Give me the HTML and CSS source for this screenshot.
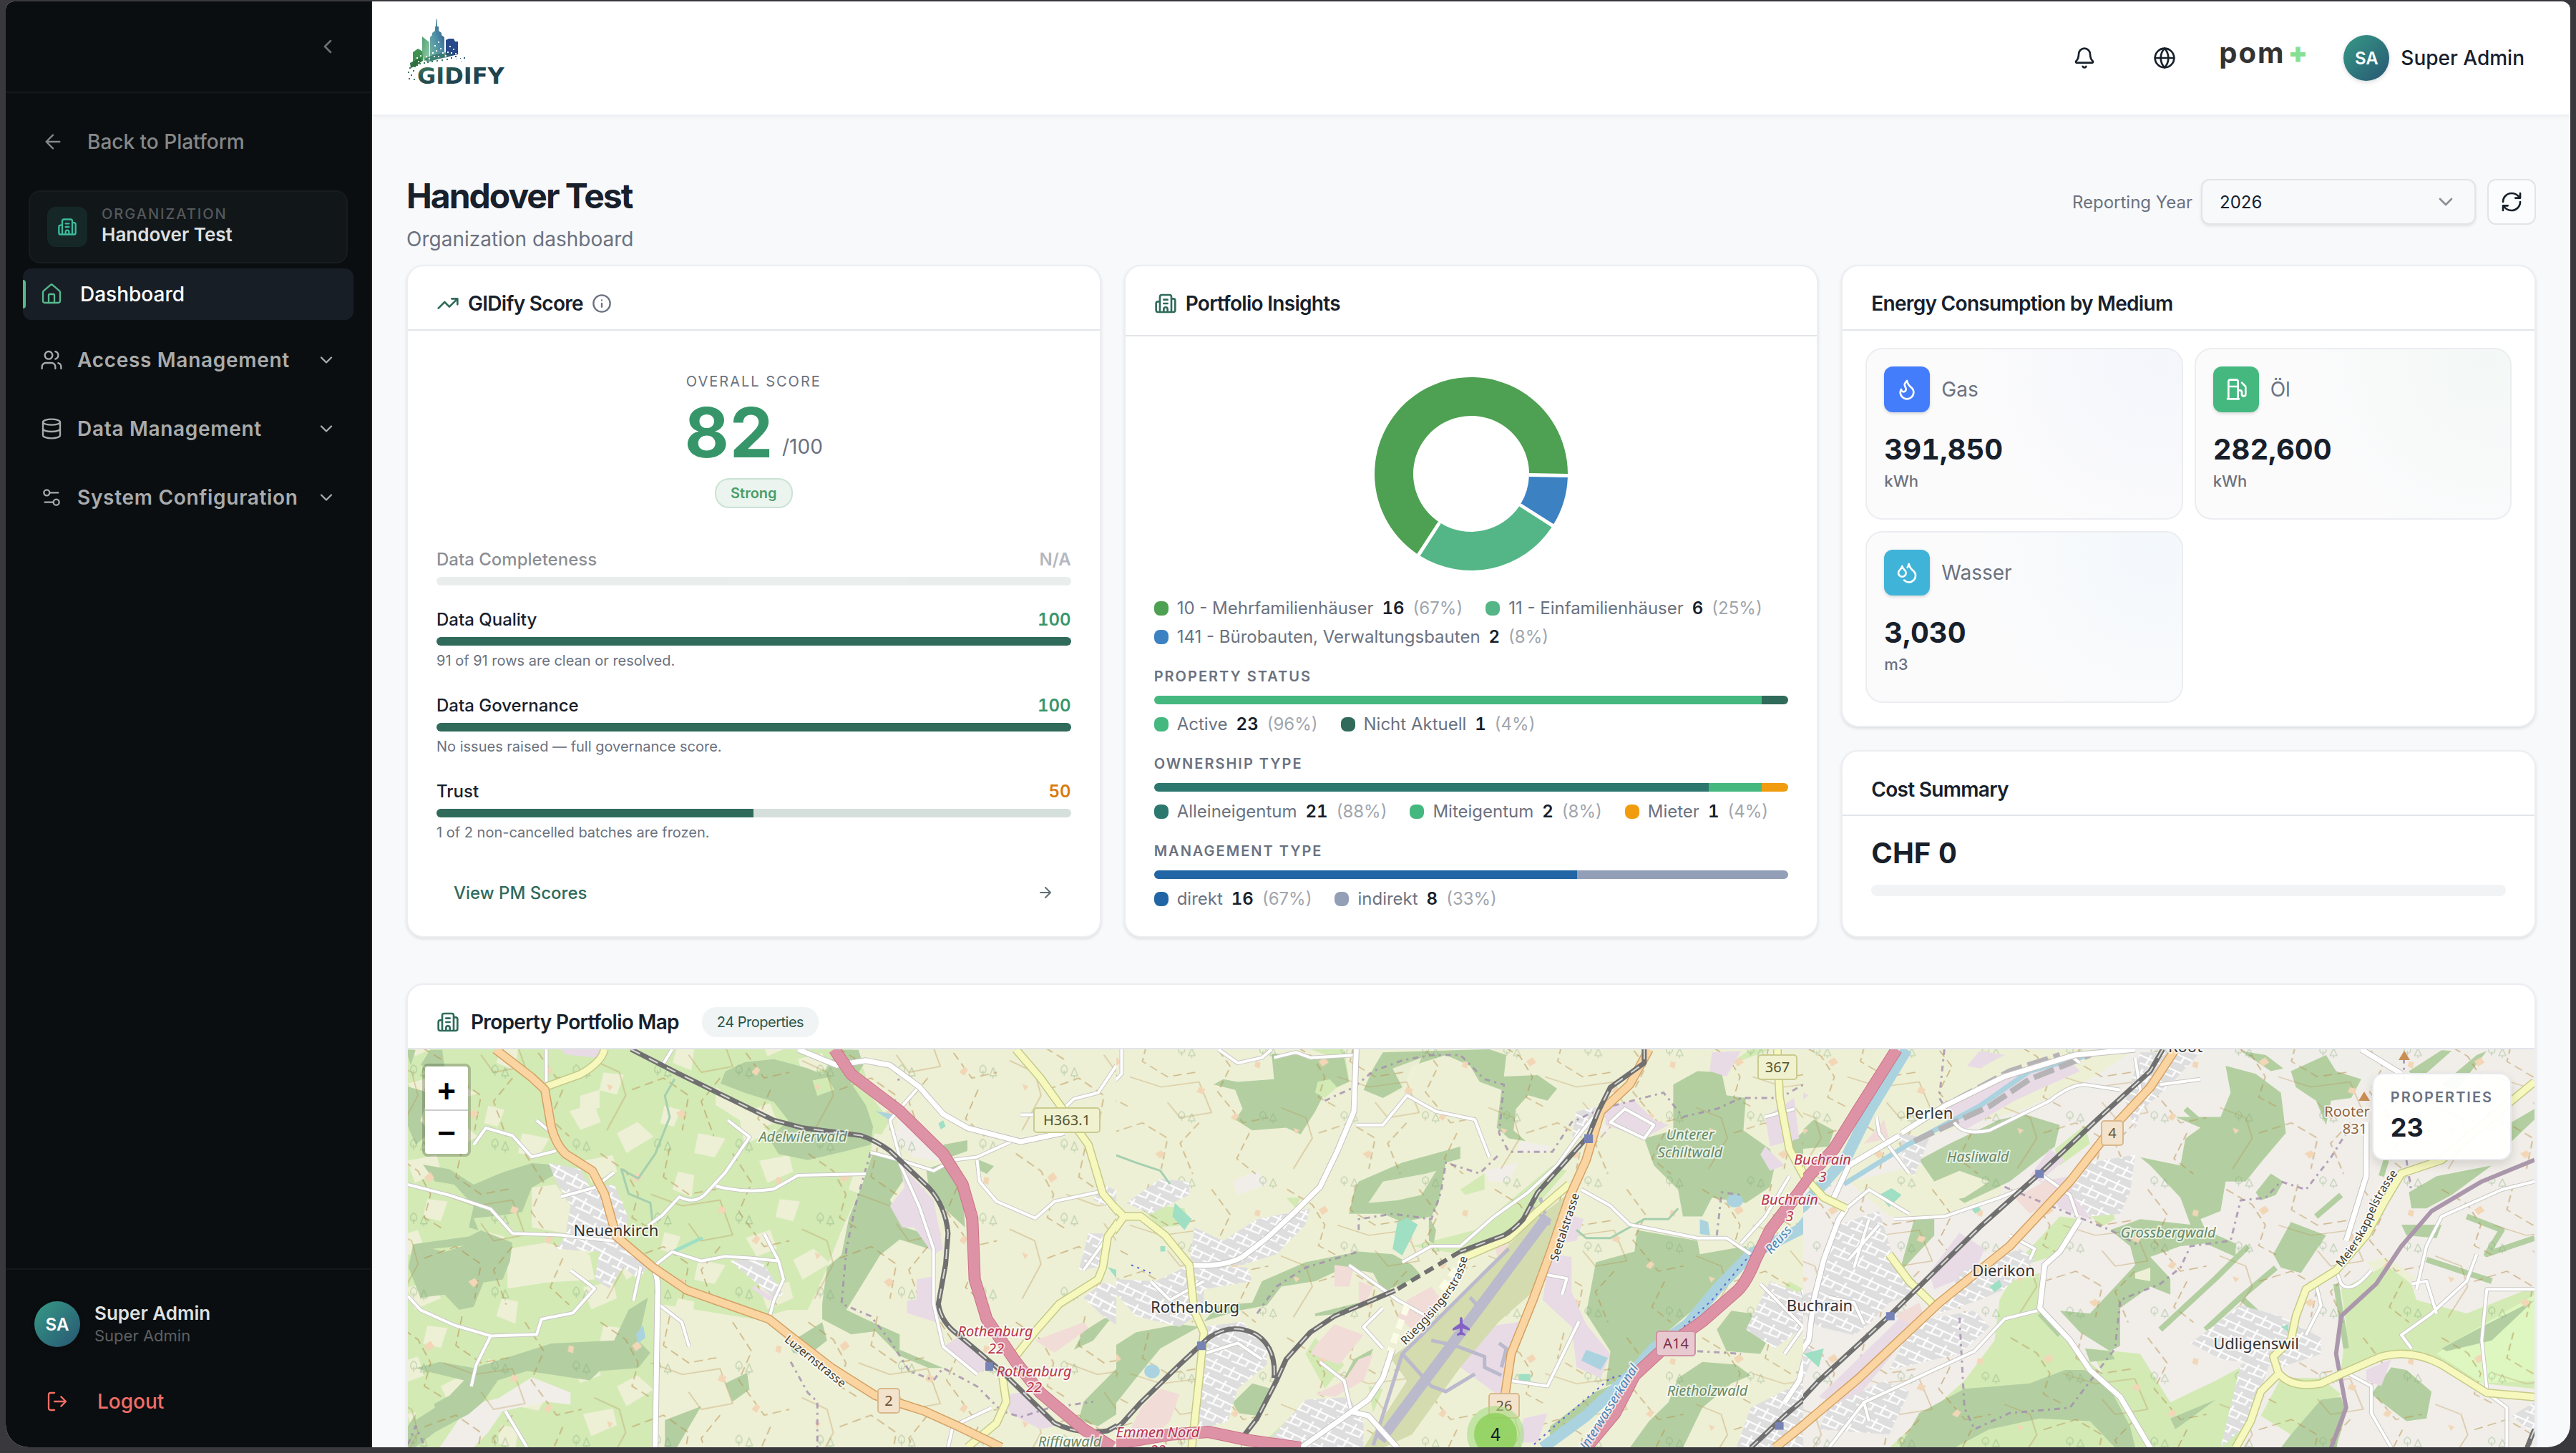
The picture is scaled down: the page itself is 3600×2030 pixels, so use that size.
FILE: index.html
```html
<!DOCTYPE html>
<html lang="en">
<head>
<meta charset="utf-8">
<title>Handover Test – GIDify</title>
<link rel="stylesheet" href="styles.css">
</head>
<body>
<svg class="sprite" aria-hidden="true">
  <symbol id="i-building" viewBox="0 0 24 24"><path d="M10 12h4M10 8h4M14 21v-3a2 2 0 0 0-4 0v3M6 10H4a2 2 0 0 0-2 2v7a2 2 0 0 0 2 2h16a2 2 0 0 0 2-2V9a2 2 0 0 0-2-2h-2M6 21V5a2 2 0 0 1 2-2h8a2 2 0 0 1 2 2v16"/></symbol>
  <symbol id="i-down" viewBox="0 0 24 24"><path d="m6 9 6 6 6-6"/></symbol>
</svg>
<div class="app">
  <aside class="sidebar">
    <div class="sidebar-top">
      <button class="collapse" type="button" aria-label="Collapse sidebar"><svg class="icon" viewBox="0 0 24 24"><path d="m15 18-6-6 6-6"/></svg></button>
    </div>
    <nav class="nav">
      <a class="back" href="#"><svg class="icon thin" viewBox="0 0 24 24"><path d="m12 19-7-7 7-7M19 12H5"/></svg>Back to Platform</a>
      <div class="org">
        <span class="org-icon"><svg class="icon small" viewBox="0 0 24 24"><use href="#i-building"/></svg></span>
        <div><div class="org-label">ORGANIZATION</div><div class="org-name">Handover Test</div></div>
      </div>
      <a class="nav-item active" href="#"><svg class="icon thin" viewBox="0 0 24 24"><path d="M15 21v-8a1 1 0 0 0-1-1h-4a1 1 0 0 0-1 1v8"/><path d="M3 10a2 2 0 0 1 .709-1.528l7-6a2 2 0 0 1 2.582 0l7 6A2 2 0 0 1 21 10v9a2 2 0 0 1-2 2H5a2 2 0 0 1-2-2z"/></svg>Dashboard</a>
      <div class="nav-groups">
        <button class="nav-item" type="button"><svg class="icon thin" viewBox="0 0 24 24"><path d="M16 21v-2a4 4 0 0 0-4-4H6a4 4 0 0 0-4 4v2M22 21v-2a4 4 0 0 0-3-3.87M16 3.13a4 4 0 0 1 0 7.75"/><circle cx="9" cy="7" r="4"/></svg><span>Access Management</span><svg class="icon small" viewBox="0 0 24 24"><use href="#i-down"/></svg></button>
        <button class="nav-item" type="button"><svg class="icon thin" viewBox="0 0 24 24"><ellipse cx="12" cy="5" rx="9" ry="3"/><path d="M3 5V19A9 3 0 0 0 21 19V5M3 12A9 3 0 0 0 21 12"/></svg><span>Data Management</span><svg class="icon small" viewBox="0 0 24 24"><use href="#i-down"/></svg></button>
        <button class="nav-item" type="button"><svg class="icon thin" viewBox="0 0 24 24"><path d="M14 17H5M19 7h-9"/><circle cx="17" cy="17" r="3"/><circle cx="7" cy="7" r="3"/></svg><span>System Configuration</span><svg class="icon small" viewBox="0 0 24 24"><use href="#i-down"/></svg></button>
      </div>
    </nav>
    <div class="sidebar-foot">
      <div class="me">
        <span class="avatar">SA</span>
        <div><div class="me-name">Super Admin</div><div class="me-role">Super Admin</div></div>
      </div>
      <button class="logout" type="button"><svg class="icon thin" viewBox="0 0 24 24"><path d="m16 17 5-5-5-5M21 12H9M9 21H5a2 2 0 0 1-2-2V5a2 2 0 0 1 2-2h4"/></svg>Logout</button>
    </div>
  </aside>

  <div class="main">
    <header class="topbar">
      <svg class="logo" viewBox="8 0 140 106" role="img" aria-label="GIDIFY">
        <defs>
          <linearGradient id="lg-word" x1="0" y1="0" x2="1" y2="1"><stop offset="0" stop-color="#4b8f6b"/><stop offset=".3" stop-color="#27544f"/><stop offset=".6" stop-color="#1e4150"/><stop offset="1" stop-color="#1f4c4c"/></linearGradient>
          <linearGradient id="lg-tower" x1="0" y1="1" x2="1" y2="0"><stop offset="0" stop-color="#7ab8a0"/><stop offset=".5" stop-color="#4d8fa6"/><stop offset="1" stop-color="#2c4f86"/></linearGradient>
          <linearGradient id="lg-left" x1="0" y1="0" x2="1" y2="1"><stop offset="0" stop-color="#4f9f74"/><stop offset="1" stop-color="#9acdb0"/></linearGradient>
        </defs>
        <path fill="#3f9150" d="M17 53l7-5 7 4v13l-7 4-7 4z"/><path fill="#2f6f3e" d="M13 68l14-7 3 4-8 7-8 3z"/>
        <path fill="url(#lg-left)" d="M30 31l10 8v25l-8 1-2-13z"/>
        <path fill="url(#lg-tower)" d="M50 7h1v10h2v6l4 3v3l4 3v28l-20 6V32l3-3v-3l4-3v-6h1z"/>
        <path fill="#27488a" d="M63 36l4-2h7l2 4h4v18l-17 4z"/>
        <path fill="#2f6d5f" d="M33 62l12-5 18-4 10 3-8 4-16 3-12 4z" opacity=".7"/>
        <g fill="#fff"><path d="M47 43h2v2h-2zM52 38h2v2h-2zM49 50h2v2h-2zM55 47h2v2h-2zM44 53h2v2h-2zM58 53h2v2h-2zM68 44h2v2h-2zM73 48h2v2h-2zM70 53h2v2h-2zM76 54h2v2h-2zM35 58h2v2h-2zM39 61h2v2h-2zM46 58h2v2h-2zM52 58h2v2h-2zM65 52h2v2h-2zM22 60h2v2h-2zM27 57h2v2h-2zM24 65h2v2h-2zM62 57h2v2h-2z"/></g>
        <g fill="#3a7a5c"><path d="M15 68h2v2h-2zM19 72h2v2h-2zM12 74h2v2h-2zM17 78h2v2h-2zM10 80h2v2h-2zM14 84h2v2h-2zM11 89h2v2h-2zM18 90h2v2h-2zM22 70h2v2h-2zM26 68h2v2h-2zM32 67h2v2h-2zM37 66h2v2h-2zM43 65h2v2h-2zM50 64h2v2h-2zM57 63h2v2h-2zM64 62h2v2h-2z"/></g>
        <g fill="#2d5c8c"><path d="M70 60h2v2h-2zM76 58h2v2h-2zM78 62h1v1h-1zM83 61h1v1h-1zM88 60h2v2h-2zM85 65h1v1h-1z"/></g>
        <text class="logo-word" x="23" y="97">GIDIFY</text>
      </svg>
      <div class="topbar-actions">
        <button class="icon-btn" type="button" aria-label="Notifications"><svg class="icon" viewBox="0 0 24 24"><path d="M10.268 21a2 2 0 0 0 3.464 0M3.262 15.326A1 1 0 0 0 4 17h16a1 1 0 0 0 .74-1.673C19.41 13.956 18 12.499 18 8A6 6 0 0 0 6 8c0 4.499-1.411 5.956-2.738 7.326"/></svg></button>
        <button class="icon-btn" type="button" aria-label="Language"><svg class="icon" viewBox="0 0 24 24"><circle cx="12" cy="12" r="10"/><path d="M12 2a14.5 14.5 0 0 0 0 20 14.5 14.5 0 0 0 0-20M2 12h20"/></svg></button>
        <span class="pom">pom<b>+</b></span>
        <button class="user" type="button"><span class="avatar">SA</span>Super Admin</button>
      </div>
    </header>

    <main class="page">
      <div class="page-head">
        <div><h1>Handover Test</h1><p>Organization dashboard</p></div>
        <div class="filters">
          <label for="year">Reporting Year</label>
          <div class="select"><select id="year"><option>2026</option></select><svg class="icon" viewBox="0 0 24 24"><use href="#i-down"/></svg></div>
          <button class="refresh" type="button" aria-label="Refresh"><svg class="icon" viewBox="0 0 24 24"><path d="M3 12a9 9 0 0 1 9-9 9.75 9.75 0 0 1 6.74 2.74L21 8M21 3v5h-5M21 12a9 9 0 0 1-9 9 9.75 9.75 0 0 1-6.74-2.74L3 16M8 16H3v5"/></svg></button>
        </div>
      </div>

      <div class="cards">
        <section class="card">
          <div class="card-head"><svg class="icon" viewBox="0 0 24 24"><path d="M16 7h6v6M22 7l-8.500 8.500-5-5L2 17"/></svg><h2>GIDify Score</h2><svg class="icon small muted" viewBox="0 0 24 24"><circle cx="12" cy="12" r="10"/><path d="M12 16v-4M12 8h.01"/></svg></div>
          <div class="score">
            <div class="score-top">
              <div class="eyebrow">OVERALL SCORE</div>
              <div class="score-row"><strong>82</strong><span>/100</span></div>
              <span class="strong-badge">Strong</span>
            </div>
            <div class="metrics">
              <div class="metric off"><div class="metric-row"><span>Data Completeness</span><b>N/A</b></div><div class="bar"></div></div>
              <div class="metric"><div class="metric-row"><span>Data Quality</span><b>100</b></div><div class="bar"><i style="width:100%"></i></div><p>91 of 91 rows are clean or resolved.</p></div>
              <div class="metric"><div class="metric-row"><span>Data Governance</span><b>100</b></div><div class="bar"><i style="width:100%"></i></div><p>No issues raised — full governance score.</p></div>
              <div class="metric"><div class="metric-row"><span>Trust</span><b class="warn">50</b></div><div class="bar"><i style="width:50%"></i></div><p>1 of 2 non-cancelled batches are frozen.</p></div>
            </div>
            <a class="pm-link" href="#">View PM Scores<svg class="icon tiny" viewBox="0 0 24 24"><path d="M5 12h14M12 5l7 7-7 7"/></svg></a>
          </div>
        </section>

        <section class="card">
          <div class="card-head tall"><svg class="icon" viewBox="0 0 24 24"><use href="#i-building"/></svg><h2>Portfolio Insights</h2></div>
          <div class="insights">
            <div class="donut">
              <svg viewBox="-136 -136 272 272" role="img" aria-label="Property types">
                <path fill="#4ea152" d="M135 0A135 135 0 1 0 -75.500 111.900L-45.300 67.200A81 81 0 1 1 81 0Z"/>
                <path fill="#54b686" d="M-71.500 114.500A135 135 0 0 0 112.600 74.500L67.500 44.700A81 81 0 0 1 -42.900 68.700Z"/>
                <path fill="#3c81c2" d="M115.100 70.500A135 135 0 0 0 134.900 4.700L80.900 2.800A81 81 0 0 1 69.100 42.300Z"/>
                <path d="M81 1.500L136 2.500M-44.500 68.500L-74 114M68.500 43.500L115 73" stroke="#fff" stroke-width="5"/>
              </svg>
            </div>
            <ul class="legend">
              <li><i class="dot c-green"></i>10 - Mehrfamilienhäuser<b>16</b><span>(67%)</span></li>
              <li><i class="dot c-mint"></i>11 - Einfamilienhäuser<b>6</b><span>(25%)</span></li>
              <li><i class="dot c-sky"></i>141 - Bürobauten, Verwaltungsbauten<b>2</b><span>(8%)</span></li>
            </ul>
            <h3>PROPERTY STATUS</h3>
            <div class="stack"><i class="c-active" style="width:95.83%"></i><i class="c-dark" style="width:4.17%"></i></div>
            <ul class="legend">
              <li><i class="dot c-active"></i>Active<b>23</b><span>(96%)</span></li>
              <li><i class="dot c-dark"></i>Nicht Aktuell<b>1</b><span>(4%)</span></li>
            </ul>
            <h3>OWNERSHIP TYPE</h3>
            <div class="stack"><i class="c-teal" style="width:87.5%"></i><i class="c-active" style="width:8.33%"></i><i class="c-amber" style="width:4.17%"></i></div>
            <ul class="legend">
              <li><i class="dot c-teal"></i>Alleineigentum<b>21</b><span>(88%)</span></li>
              <li><i class="dot c-active"></i>Miteigentum<b>2</b><span>(8%)</span></li>
              <li><i class="dot c-amber"></i>Mieter<b>1</b><span>(4%)</span></li>
            </ul>
            <h3>MANAGEMENT TYPE</h3>
            <div class="stack"><i class="c-blue" style="width:66.67%"></i><i class="c-slate" style="width:33.33%"></i></div>
            <ul class="legend">
              <li><i class="dot c-blue"></i>direkt<b>16</b><span>(67%)</span></li>
              <li><i class="dot c-slate"></i>indirekt<b>8</b><span>(33%)</span></li>
            </ul>
          </div>
        </section>

        <div class="column">
          <section class="card">
            <div class="card-head"><h2>Energy Consumption by Medium</h2></div>
            <div class="tiles">
              <div class="tile gas"><div class="tile-head"><span class="tile-icon"><svg class="icon" viewBox="0 0 24 24"><path d="M8.500 14.500A2.500 2.500 0 0 0 11 12c0-1.380-.5-2-1-3-1.072-2.143-.224-4.054 2-6 .5 2.500 2 4.900 4 6.500 2 1.600 3 3.500 3 5.500a7 7 0 1 1-14 0c0-1.153.433-2.294 1-3a2.500 2.500 0 0 0 2.500 2.500z"/></svg></span>Gas</div><strong>391,850</strong><small>kWh</small></div>
              <div class="tile oil"><div class="tile-head"><span class="tile-icon"><svg class="icon" viewBox="0 0 24 24"><path d="M3 22h12M4 9h10M14 22V4a2 2 0 0 0-2-2H6a2 2 0 0 0-2 2v18M14 13h2a2 2 0 0 1 2 2v2a2 2 0 0 0 2 2 2 2 0 0 0 2-2V9.830a2 2 0 0 0-.59-1.420L18 5"/></svg></span>Öl</div><strong>282,600</strong><small>kWh</small></div>
              <div class="tile water"><div class="tile-head"><span class="tile-icon"><svg class="icon" viewBox="0 0 24 24"><path d="M7 16.300c2.200 0 4-1.830 4-4.050 0-1.160-.57-2.260-1.710-3.190S7.290 6.750 7 5.300c-.29 1.450-1.140 2.840-2.290 3.760S3 11.100 3 12.250c0 2.220 1.800 4.050 4 4.050z"/><path d="M12.560 6.600A10.970 10.970 0 0 0 14 3.020c.5 2.500 2 4.900 4 6.500s3 3.500 3 5.500a6.980 6.980 0 0 1-11.910 4.970"/></svg></span>Wasser</div><strong>3,030</strong><small>m3</small></div>
            </div>
          </section>
          <section class="card grow">
            <div class="card-head low"><h2>Cost Summary</h2></div>
            <div class="cost"><strong>CHF 0</strong><div class="cost-bar"></div></div>
          </section>
        </div>
      </div>

      <section class="card map-card">
        <div class="card-head"><svg class="icon" viewBox="0 0 24 24"><use href="#i-building"/></svg><h2>Property Portfolio Map</h2><span class="count-badge">24 Properties</span></div>
        <div class="map">
          <svg class="map-art" viewBox="0 0 2972 556" role="img" aria-label="Map of the Rothenburg area">
            <defs>
              <pattern id="tracks" width="330" height="290" patternUnits="userSpaceOnUse" patternTransform="scale(1.3 1.9)">
                <path class="track" d="M10 20l40 30 20 40-10 40 30 20M120 10l-10 50 40 30 50-10M60 200l50-20 40 30-10 60M220 20l30 50-20 50 40 60 40-10M200 180l-30 40 20 60M280 200l-20 50 30 30"/>
                <path class="track solid" d="M90 90l50 20 60-10 20 60-50 10-20-30M0 150l40 20 10 40-30 60"/>
                <path class="yard" d="M60 60l10-8 6 10-10 8zM200 110l10 4-4 10-10-4zM130 240l10-6 6 8-8 8zM290 60l8 2-2 12-8-4zM20 190l10 4-6 8zM250 170l8-10 6 6-6 10z"/>
              </pattern>
              <pattern id="fields" width="260" height="230" patternUnits="userSpaceOnUse" patternTransform="scale(1.4 1.8)">
                <path class="farm" d="M10 20l36-14 10 34-30 14zM80 60l30-20 24 26-40 30zM150 10l24 8-10 30-20-6zM200 60l40 10-16 34-30-8zM30 110l44-10 6 30-38 20zM170 130l24 6-4 40-28-14zM60 180l30 4-10 36-26-8z"/>
              </pattern>
              <pattern id="streets" width="34" height="30" patternUnits="userSpaceOnUse" patternTransform="scale(1.2 1.9) rotate(28)">
                <rect class="town" width="34" height="30"/><path class="lane" d="M0 8h34M10 0v22M0 22l24-2M26 8v14"/>
              </pattern>
              <pattern id="trees" width="120" height="110" patternUnits="userSpaceOnUse" patternTransform="scale(1.4 2.2)">
                <path class="tree" d="M40 26c-7 4-5 12 0 12s7-8 0-12zM40 34v8M50 42l5-12 5 12zM55 42v4"/>
              </pattern>
            </defs>

            <!-- west tile -->
            <svg x="0" y="0" width="991" height="556" viewBox="44 248 1465 1301" preserveAspectRatio="none">
              <defs>
                <g id="w-mw"><path d="M925 248L960 330L1060 450L1150 590L1190 690L1210 800L1215 1000L1240 1130L1300 1270L1350 1370L1440 1490L1500 1549"/></g>
                <g id="w-pr"><path d="M225 248L300 340L327 380L340 500Q350 560 370 590L425 645L450 720L475 860L550 960L620 1035L790 1130L830 1180L920 1290L1010 1380L1110 1430L1180 1480L1270 1549"/></g>
                <g id="w-se"><path d="M450 248Q445 290 400 330L330 370M1300 248L1350 340L1400 450L1450 560L1465 640L1480 720L1520 795L1490 860L1480 960L1470 1000L1390 1080L1340 1170L1300 1250M1270 1290L1280 1400L1260 1470L1200 1549"/></g>
                <g id="w-wh"><path d="M850 248L930 300L990 285L1040 300L1100 370L1150 460L1200 505L1310 550L1400 520M550 960Q562 990 560 1050L555 1549"/></g>
                <g id="w-mi"><path d="M1000 585L1060 610L1130 645L1170 610L1220 600L1290 550M1220 610L1225 680L1260 745L1340 800L1380 745L1470 715M705 480L750 535L700 650L665 710Q640 760 605 730L570 790L540 825M680 695Q740 720 800 705L850 660L990 655M44 690L130 725L215 770L260 850L360 855L470 875M550 960L590 910L650 940L700 925L750 930L810 940L820 1000L800 1070L790 1130M44 1055L70 1100L140 1150L215 1185L310 1180L320 1130L385 1110L430 1030L380 970M215 1185L185 1280L175 1350M245 1430L290 1549M565 1085L610 1140L625 1220M180 560L205 505L260 530L300 600L350 580M330 248V370M1508 300L1470 390L1420 410L1400 440M1100 370L1040 480L1060 600M470 650L430 700L360 730M310 480L340 520M590 248L570 300M1340 462H1310M1060 620L1100 760L1130 900L1130 1080L1150 1220L1220 1310M780 850L810 940M1440 970L1490 860M1160 1549L1170 1480L1250 1420M510 1070L525 960"/></g>
                <g id="w-rail"><path d="M505 248L600 325L800 480L860 505L980 530Q1010 545 1040 580L1120 700Q1155 760 1160 850L1155 950L1140 1080Q1145 1140 1180 1180L1270 1300L1380 1470Q1430 1510 1490 1495L1530 1460"/></g>
              </defs>
              <rect class="meadow" x="44" y="248" width="1465" height="1301"/>
              <rect x="44" y="248" width="1465" height="1301" fill="url(#fields)"/>
              <path class="farm" d="M975 248H1509V1549H560V1080L640 1100L760 1130L830 1100L870 1100L900 1000L940 840L980 700L1010 560L1040 480L1000 400ZM250 900L330 880L420 920L430 1000L330 1010L250 1030ZM680 370L760 470L790 520L740 560L730 480L680 430ZM400 400L440 380L440 440L400 450ZM300 700L350 690L380 760L370 850L300 830ZM44 360L90 340L190 390L90 450ZM850 280L900 260L910 310L860 330Z"/>
              <path class="bare" d="M170 1410L230 1390L300 1320L380 1370V1410L330 1400L240 1430L210 1500L180 1549H110ZM1060 460L1150 560L1170 620L1090 600L1050 540Z"/>
              <path class="forest" d="M700 320L740 290L800 280L870 310L900 330L935 250H975L985 300L960 360L990 430L1005 500L1000 560L950 580L870 610L810 590L790 540L830 480L800 420L740 390L690 360ZM1005 585L1050 600L1075 660L1040 740L1070 830L1110 850L1120 900L1060 870L1020 920L985 1010L950 1100L990 1130L1060 1180V1230L1090 1250L1150 1290H1120L1060 1250L1010 1170L960 1180L900 1130V1080L910 960L940 920L955 800L985 680ZM1115 640L1150 620L1190 700L1195 830L1160 780L1120 700ZM1150 560L1200 545V580L1165 600ZM1225 610L1255 630L1240 655L1220 640ZM75 625L130 640L180 690L240 650L300 620L340 625L345 660L300 700L280 780L240 790L180 800L190 840L170 830L180 760L140 690L100 680ZM55 885L170 860L195 840L260 880L255 940L240 1000L200 1010L180 1090L150 1100L120 1050L70 1060L45 960ZM44 370L90 390L70 480L90 520L60 560L44 500ZM44 1480L60 1440L130 1380L160 1330L80 1300L60 1290L110 1270L180 1290L300 1230L340 1210L470 1200L500 1100L540 1060L520 1200L545 1240L520 1290L440 1300L420 1330L290 1300L230 1330L200 1400L170 1440L100 1500L60 1549H44ZM575 1460L650 1415L600 1549H575ZM700 1340L745 1305L750 1360L715 1400ZM830 1210L900 1140L910 1200L870 1250L840 1240ZM1509 1110L1490 1140L1460 1200L1420 1230L1440 1170L1500 1110ZM1440 1400L1509 1290V1440L1470 1480L1430 1460ZM90 250H115L120 310L70 300ZM880 350L920 340L925 390L890 420ZM40 250L60 250L50 300Z"/>
              <path class="meadow" d="M880 350L910 340L925 380L890 400ZM60 1400L90 1360L100 1420L60 1460ZM95 900L160 890L120 910Z"/>
              <rect x="44" y="248" width="1465" height="1301" fill="url(#trees)" opacity=".4"/>
              <rect x="44" y="248" width="1465" height="1301" fill="url(#tracks)"/>
              <path class="industry" d="M1040 760L1070 700L1060 620L1130 740L1150 900L1130 920L1090 830H1065ZM1095 1000L1130 990L1135 1140L1075 1110V1070L1095 1065ZM1150 1220L1180 1190L1250 1280L1220 1310ZM1270 1380L1310 1370L1380 1480L1350 1490L1290 1440ZM760 1020L800 1060L790 1070L755 1030ZM360 248H450L430 275L370 265Z"/>
              <path class="retail" d="M1340 1200L1440 1140L1450 1160L1380 1240Z"/>
              <path fill="url(#streets)" d="M335 620L400 640L420 700L470 690L500 800L490 860L540 960L520 1000L490 960L460 1030L430 1000L440 910L350 900L370 860L380 760L350 680ZM710 940L770 930L800 1000L820 1050L800 1060L740 980ZM1480 690L1509 710V780L1460 740ZM1480 1010L1509 1020V1150L1480 1120L1440 1060ZM1450 850L1480 850L1470 960L1430 970Z"/>
              <path class="lake" d="M515 1180L530 1150L535 1190L520 1210ZM1010 450L1045 460L1040 480Z"/>
              <path class="sport" d="M590 905L650 860L655 868L600 910ZM1490 960L1509 970V1000ZM1140 490L1150 480L1155 500L1145 510Z"/>
              <path class="stream" d="M595 345L575 400L585 470L555 590L520 670L485 640L500 720L545 750L550 820"/>
              <path class="border" d="M1000 585L970 750L950 900L940 1080L1000 1120L1040 1200L1080 1300L1130 1330L1150 1290L1220 1350L1270 1430L1310 1450L1370 1420L1460 1400M990 290L1050 300L1060 360M835 1270L870 1370L890 1400L890 1549M44 1540L60 1480L80 1549"/>
              <use href="#w-mi" class="case-minor"/><use href="#w-mi" class="fill-minor"/>
              <use href="#w-wh" class="case-road"/><use href="#w-wh" class="fill-road"/>
              <use href="#w-se" class="case-second"/><use href="#w-se" class="fill-second"/>
              <use href="#w-pr" class="case-first"/><use href="#w-pr" class="fill-first"/>
              <use href="#w-rail" class="rail"/><use href="#w-rail" class="rail-gap"/>
              <use href="#w-mw" class="case-motor"/><use href="#w-mw" class="fill-motor"/>
              <rect class="station" x="1237" y="1271" width="16" height="28"/>
            </svg>

            <!-- middle tile -->
            <svg x="990" y="0" width="961" height="556" viewBox="89 69 1421 1478" preserveAspectRatio="none">
              <defs>
                <g id="m-mw"><path d="M1568 430L1500 600L1440 740L1410 850Q1390 940 1370 970L1300 1080L1220 1180L1160 1280L1120 1420L1060 1549M0 1430L40 1520L100 1530L200 1500L280 1490L360 1520L470 1549"/></g>
                <g id="m-pr"><path d="M1190 69L1150 200L1090 300L1060 480L1025 620L985 830L950 1000L905 1200L890 1380M1450 1549L1568 1380"/></g>
                <g id="m-se"><path d="M0 380L40 480L50 590L105 690H140L190 760L240 870L250 1040L270 1120L260 1300L245 1549M105 690L65 790V910L0 980M1455 69L1460 250L1480 440L1510 540L1568 640M1025 570L960 670L900 770L810 840"/></g>
                <g id="m-wh"><path d="M585 69L580 300L545 450L510 580L460 670L400 770L350 840Q310 880 240 870M660 1180L640 1290L610 1370L575 1415L470 1549M575 1415L610 1430L670 1549M1509 960L1530 1100L1500 1300L1470 1380"/></g>
                <g id="m-mi"><path d="M415 100L460 80L490 100L585 90M585 350H640L690 240L750 300L830 330L845 400L860 470M1050 590L1110 650L1150 720L1290 770H1350L1400 830M570 870L640 960L670 1000L740 1070M510 1230L560 1300L575 1415M1075 320L1040 400L1000 500L940 600L870 690L800 800L740 800L680 860M905 1300L980 1320L1045 1080M300 69L340 120L390 100L410 69M100 69V160L60 235M1140 290L1200 350L1180 400L1110 340ZM960 900L1020 920L1010 980M1480 540L1430 690L1380 790M1430 320L1490 290M270 930L200 1000L160 930M270 1200L340 1160L390 1220M640 1180L600 1100L640 1030M130 1480L160 1500M1420 940L1509 1100L1470 1200"/></g>
                <g id="m-rail"><path d="M1180 69V120L1110 210L1085 300L1065 390L1010 500L960 600L930 700Q910 740 890 760L800 820M665 965L540 1060L490 1120L440 1220L420 1300L380 1440L350 1510M40 1490Q80 1490 100 1460L140 1380L220 1240L280 1140Q330 1080 380 1130Q420 1180 415 1290M1400 1549L1470 1430L1568 1280"/></g>
              </defs>
              <rect class="farm" x="89" y="69" width="1421" height="1478"/>
              <path class="meadow" d="M440 620L470 620L460 660ZM700 800L830 740L990 500L1020 520L900 770L800 830ZM800 590L850 530L850 590L810 610ZM520 1330L560 1240L500 1140L480 1200ZM610 1320L640 1330L620 1420ZM130 640L230 660L240 720L180 730ZM1340 140L1440 69H1400L1350 130ZM1440 1010L1480 930L1509 960L1470 1000ZM490 69H560L570 180L540 100ZM380 1549L440 1450L490 1420L470 1549Z"/>
              <path class="bare" d="M330 560L380 520L400 570L340 610ZM920 410L990 430L1010 380L980 450L920 450ZM850 520L920 490L900 560L860 560ZM1080 340L1110 360L1100 400Z"/>
              <path class="forest" d="M410 85L560 100L570 190L520 230L500 300L470 385L440 360L370 370L335 330L350 290L335 220L290 200L310 180L340 190L415 180ZM640 80L860 69L895 90L890 170L960 165L1000 215L980 260L940 240L915 290L910 370L935 410L900 400L875 360L885 220L840 190L820 130L770 90L700 130L680 220L640 250L600 220L620 140ZM590 560L680 490L800 430V475L770 490L755 640L740 690L680 710L640 680H570L580 600ZM1240 200L1290 150L1340 155L1350 240L1390 250L1385 370L1440 440L1450 500L1440 580L1390 640L1320 620L1300 690H1260L1250 590L1200 500L1180 400L1240 370ZM1165 740L1290 780L1295 830L1390 800L1400 830L1330 960L1240 1100L1205 1150L1200 1210L1150 1290L1100 1320L1110 1190L1060 1050L1080 860L1160 820ZM390 930L480 860L590 820L660 830L700 870L720 910L640 970L620 900L560 880L500 930L430 950L400 1020L340 1040L270 1080L300 1020L370 1010ZM0 1290L60 1200L130 1120L220 1090L260 1100L180 1180L130 1290L90 1380L0 1400ZM1250 1290L1300 1230L1370 1240L1400 1280L1360 1310L1300 1400L1260 1549H1150L1190 1450L1230 1380ZM985 1470L1080 1340L1150 1290L1120 1360L1030 1470L985 1510ZM330 1380L370 1310L410 1330L380 1430L340 1420ZM1330 1110L1360 1040L1400 1050L1440 1130L1420 1200L1350 1190ZM1480 420L1530 340V480L1500 480ZM500 1050L590 1010L560 1050L500 1060ZM580 1220L620 1180L600 1280L560 1290ZM735 690L750 740L745 790L735 780Z"/>
              <path class="farm" d="M610 640L640 560L730 530L750 520L720 610L670 630ZM640 250L680 210L660 140L720 100L690 220Z" opacity=".9"/>
              <path class="meadow" d="M505 190L530 180L545 210L520 250L500 230Z"/>
              <rect x="89" y="69" width="1421" height="1478" fill="url(#trees)" opacity=".4"/>
              <rect x="89" y="69" width="1421" height="1478" fill="url(#tracks)"/>
              <path class="industry" d="M1100 280L1160 260L1200 330L1230 350L1180 400L1100 350ZM1320 80L1380 75L1350 170L1315 150ZM1430 320L1490 250L1500 400L1440 430ZM850 1100L930 1080L900 1200L890 1370L800 1250ZM985 830L1030 840V970L1060 1090L1110 1200L1090 1290L1040 1250L1030 1100L970 1000ZM1020 680L1055 700L1040 780L1000 790ZM1430 430L1470 500L1440 520L1420 460ZM930 1440L980 1420L960 1530H920Z"/>
              <path class="retail" d="M540 870L580 880L570 950H540ZM500 1170L540 1090L600 1130L550 1240L490 1200ZM180 1330L220 1350L200 1450L140 1549H100L140 1400ZM500 1350L560 1300L590 1220L620 1200L600 1300L540 1360ZM690 1000L740 950L770 1020L700 1110L670 1060ZM590 930L620 950L600 1030L590 1000ZM870 800L900 790L880 860Z"/>
              <path fill="url(#streets)" d="M250 730L310 780L380 700L490 660L480 720L420 830L350 870L240 880ZM60 920L170 930L240 870L360 880L370 930L270 960V1040L220 1100L130 1060ZM110 640L180 550L240 560V610L160 680ZM270 1100L350 1080L400 1180V1240L340 1330L320 1450L250 1490L260 1200ZM480 1370L570 1360L600 1450V1549H390L440 1450ZM1390 1110L1440 930L1509 980V1100L1450 1180ZM1400 1400L1509 1300V1549H1370ZM1040 300L1090 280L1070 360L1030 400ZM0 700L90 750L60 880L0 860Z"/>
              <path class="airfield" d="M1035 590L985 830L950 970L880 1080L800 1250L700 1500L640 1549H600L690 1300L655 1215L720 1130L830 930L940 720Z"/>
              <path class="runway wide" d="M980 690L635 1520"/><path class="runway" d="M945 650L985 720M965 620L975 680M900 810L860 880L720 1130L680 1200L740 1320L770 1340L830 1275M680 1200L620 1540M740 1150L790 1170L850 1210L850 1250L885 1280M885 1250L895 1180L880 1160M820 990L840 1030"/>
              <path class="lake" d="M1350 632a16 24 0 1 1 34 0a17 24 0 1 1-34 0M147 1265a16 26 0 1 1 32 0a16 26 0 1 1-32 0M1295 700L1312 710L1316 760L1295 755ZM1060 1185L1105 1215L1090 1260L1050 1225Z"/>
              <path class="sport" d="M670 710L690 695L712 720L680 835L660 810ZM210 640L245 700L230 740L205 690ZM920 1275H945V1300H922ZM180 800H190V820H180Z"/>
              <path class="stream" d="M1040 740L1060 770L1110 770L1180 700L1230 700L1250 660M85 460L130 490L180 520L200 570"/>
              <path class="border" d="M520 260L580 210L620 150L680 110L740 90L800 90L850 180L890 200L880 380L900 450L990 450L1030 340L1090 290L1220 230L1260 320L1330 290L1380 250L1460 250L1509 200M590 740V700L660 680L740 700L760 600L770 490L840 530L880 460M1330 760L1340 600L1380 610M380 1050L420 950L480 880L590 820M1290 1190L1380 1200"/>
              <path class="river" d="M1568 600L1500 740L1400 830L1330 960L1270 1090L1200 1180L1150 1280L1060 1430L970 1549"/>
              <path class="dots" d="M1400 830L1320 1000L1250 1120L1160 1270L1110 1290L1000 1460L950 1540M120 870L160 900"/>
              <use href="#m-mi" class="case-minor"/><use href="#m-mi" class="fill-minor"/>
              <use href="#m-wh" class="case-road"/><use href="#m-wh" class="fill-road"/>
              <use href="#m-se" class="case-second"/><use href="#m-se" class="fill-second"/>
              <path class="tunnel-road" d="M810 840L760 960M690 1020L655 1190"/>
              <use href="#m-pr" class="case-first"/><use href="#m-pr" class="fill-first"/>
              <use href="#m-rail" class="rail"/><use href="#m-rail" class="rail-gap"/><path class="tunnel" d="M800 820L665 965"/>
              <use href="#m-mw" class="case-motor"/><use href="#m-mw" class="fill-motor"/>
              <path class="station" d="M1056 385h18v32h-18zM256 1154h18v32h-18zM1450 1454h18v28h-18z"/>
            </svg>

            <!-- east tile -->
            <svg x="1950" y="0" width="1022" height="556" viewBox="29 69 1456 1478" preserveAspectRatio="none">
              <defs>
                <g id="e-mw"><path d="M215 69L140 290L90 440L40 540L0 640"/></g>
                <g id="e-pr"><path d="M770 69L720 210L640 370L560 560L440 800L300 1010L140 1290L0 1510"/></g>
                <g id="e-se"><path d="M0 380L30 540L70 620L115 660M1485 190L1420 290L1300 480L1220 530L1185 640L1150 760L1090 890L1030 960L1010 1060L1000 1150L965 1210L975 1270Q1000 1330 1060 1310L1100 1275L1180 1210Q1240 1180 1300 1240L1390 1345L1485 1360M975 1275L940 1340L920 1450L890 1549M200 830L240 930L290 1020"/></g>
                <g id="e-wh"><path d="M580 700L540 820L510 870L500 1030L560 1150L600 1260L660 1360L720 1549M115 660L100 700L70 850L50 1000L40 1150L0 1260M225 380L310 280L430 170L570 90L690 69M90 620L120 500L220 390M1140 69L1220 160M1150 340L1150 540L1110 780"/></g>
                <g id="e-mi"><path d="M210 700L310 690L420 620L460 590M500 530L560 610L575 690M370 1190L150 1380L80 1549M495 1040L430 1070L370 1190M330 340Q345 390 400 370L520 260Q560 200 590 200L660 220M1090 890L1100 940Q1120 980 1160 890M1485 560L1420 590L1300 690L1270 800L1250 960M1370 830L1350 930L1280 1050L1220 1130L1240 1180M1485 960L1390 960L1380 1150L1390 1330M1240 940L1270 930L1290 1050M1050 940L1060 1020L1030 1130M175 320L180 380L240 530M115 660L160 590L240 680M160 700L130 880M440 760L490 810L480 850M700 220L690 100M740 200L820 180M180 720L120 850M1390 1345L1430 1400L1430 1549M1110 1270L1160 1320L1160 1420L1200 1549M80 990L130 1010L150 1090M150 1380L160 1450M560 90L580 120"/></g>
                <g id="e-rail"><path d="M745 69L720 150L620 320L500 530L380 730L200 1060L60 1300L0 1420M1485 1480L1470 1549"/></g>
              </defs>
              <rect class="bare" x="29" y="69" width="1456" height="1478"/>
              <path class="farm" d="M0 69H690L600 180L470 290L300 380L200 460L120 560L0 560ZM120 560L260 500L430 560L420 620L300 690H200ZM1150 860L1190 840L1250 920L1200 960ZM430 1500L560 1440L640 1549H420Z"/>
              <path class="meadow" d="M440 930L500 900V1060L640 1300L740 1549H200L350 1300L410 1150L420 1000ZM600 1180L700 1200L760 1380L850 1300L900 1250L940 1380L900 1549H730L640 1330ZM1100 960L1190 870L1240 940L1250 1000L1350 1050L1485 950V1330L1380 1310L1240 1190L1180 1210L1100 1260L1110 1090ZM470 830L540 690L580 700L540 830L470 870ZM600 680L640 650L650 700L620 730ZM530 440L590 350L600 420L540 500ZM980 1290H1060L1100 1350L1000 1500L940 1430Z"/>
              <path class="golf" d="M1290 1200L1320 1160L1485 980V1300L1380 1310Z"/>
              <path class="forest" d="M260 480L320 420L420 330L470 310L540 350L530 430L440 560L350 640L290 560ZM870 130L930 160L980 230L990 380L940 490L910 560H870L860 670L820 700L830 740L890 790V840L830 790L780 800L720 840L760 920V980L720 950L660 1030V1170L640 1190L580 1120L540 1040L600 1050L650 950L690 870L680 800L640 740L700 700L800 720L780 620L720 500L700 470L780 500L790 400L820 360L770 320L860 320L880 230ZM1010 210L1000 150L1070 90L1090 150L1140 180L1120 250L1080 260L1070 350L1050 260ZM1235 600L1290 540L1400 500L1320 610L1270 660H1240ZM965 830L1000 710L1070 760L1020 900L980 880ZM930 600L960 530L985 560L970 610L940 630ZM350 1330L480 1310L550 1260H590L640 1330L680 1470L690 1549H650L600 1450L500 1440L400 1480L330 1549H220L260 1420ZM1000 1500L1060 1370L1100 1360L1110 1420L1090 1549H980ZM1160 1350L1200 1250L1230 1260L1280 1340L1270 1440L1230 1450ZM10 400L50 330L90 370L80 430L20 440ZM250 700L290 690V760L220 900ZM900 75L950 90L985 140L960 150ZM1300 200L1370 90L1390 75L1330 220ZM1235 150L1300 72L1320 75L1250 190ZM1430 350L1485 290V330L1440 410ZM760 1440L850 1370L800 1440L770 1480ZM590 1180L640 1190L650 1220L600 1230ZM1220 720L1300 720L1290 770L1230 760ZM1300 1180L1380 1100L1485 1000L1400 1150L1310 1190Z"/>
              <path class="farm" d="M290 560L340 520L400 560L350 620L300 640ZM690 900L720 880L720 930L690 920Z"/>
              <path class="strip" d="M915 800L850 920L740 1110M970 880L900 990L830 1110M1100 610L1050 690M1350 690L1420 740L1390 830L1485 770M1270 850L1400 930M900 990L940 1060M1090 940L1110 1180M500 1050L540 1130M790 290L820 340M1180 540L1190 480"/>
              <rect x="29" y="69" width="1456" height="1478" fill="url(#trees)" opacity=".4"/>
              <rect x="29" y="69" width="1456" height="1478" fill="url(#tracks)"/>
              <path class="industry" d="M300 290L450 150L560 110L580 150L450 260L350 370L320 330ZM340 750L390 810L370 900L290 960L280 900ZM500 560L560 540L600 700L540 660ZM60 1360L220 1070L260 1080L120 1400ZM480 540L520 440L550 480L500 560ZM1150 1260L1200 1220L1180 1320L1150 1300ZM0 200L40 240L0 300ZM355 130L380 75L430 90L380 140Z"/>
              <path class="retail" d="M450 620L520 550L540 620L480 680ZM210 1060L260 1010L270 1060L240 1090ZM150 420L190 330L200 400Z"/>
              <path fill="url(#streets)" d="M100 720L180 670L210 850L270 960L200 1010L160 1090L130 1130L60 1100L0 1000L60 960ZM220 380L280 400L250 540L230 500ZM700 80L820 80L760 200L700 300L690 370L670 260ZM600 490L690 460L680 600L660 680L600 690L560 600ZM340 900L460 810L490 850L430 960L380 1000L300 1050ZM250 1080L370 1040L400 1100L340 1200L200 1260ZM800 1160L900 1020L980 1060L1060 1140V1200L980 1250L860 1220ZM900 1240L960 1220L920 1450L860 1549ZM80 1400L190 1300L240 1340L200 1500L60 1480ZM1440 1430L1485 1380V1500ZM29 1130L50 1200L29 1300Z"/>
              <path class="sport" d="M180 610L205 585L225 610L200 655ZM365 665L375 645L383 665L372 680ZM400 950L420 925L425 950L410 970ZM980 1100L995 1090L995 1120ZM30 1200L70 1180L60 1250Z"/>
              <path class="border" d="M310 69L300 250L310 280M430 580L560 680L640 740L700 800M1120 350L1080 470L1030 590L980 560L950 620L900 630L880 780L800 800L780 880L740 940L660 1000L650 1180L560 1400L440 1420L370 1480L350 1400L340 1060M1225 100L1225 200M1230 480L1240 600"/>
              <path class="canal" d="M110 570L240 420L380 280L480 150L560 110L640 69"/>
              <path class="river" d="M235 69L160 300L115 470L30 650L0 690"/>
              <path class="sidings" d="M250 410L400 280L480 180L600 90M330 260L440 150L540 90"/>
              <path class="district" d="M1485 480L1380 560L1280 670L1220 800L1170 940L1100 1060L1090 1200L1110 1400L1080 1549"/>
              <use href="#e-mi" class="case-minor"/><use href="#e-mi" class="fill-minor"/>
              <use href="#e-wh" class="case-road"/><use href="#e-wh" class="fill-road"/>
              <use href="#e-se" class="case-second"/><use href="#e-se" class="fill-second"/>
              <use href="#e-pr" class="case-first"/><use href="#e-pr" class="fill-first"/>
              <use href="#e-rail" class="rail"/><use href="#e-rail" class="rail-gap"/>
              <use href="#e-mw" class="case-motor"/><use href="#e-mw" class="fill-motor"/>
              <path class="station" d="M491 517h17v30h-17zM194 1045h17v30h-17z"/>
            </svg>

            <!-- labels -->
            <g class="place"><text x="291" y="261">Neuenkirch</text><text x="1100" y="368">Rothenburg</text><text x="2126" y="97">Perlen</text><text x="2230" y="317">Dierikon</text><text x="1973" y="366">Buchrain</text><text x="2583" y="419">Udligenswil</text><text x="2484" y="4">Root</text></g>
            <g class="wood"><text x="552" y="129">Adelwilerwald</text><text x="925" y="555">Riffigwald</text><text x="1792" y="126">Unterer</text><text x="1792" y="151">Schiltwald</text><text x="1816" y="484">Rietholzwald</text><text x="2194" y="157">Hasliwald</text><text x="2460" y="263">Grossbergwald</text></g>
            <g class="exit"><text x="821" y="401">Rothenburg</text><text x="822" y="425">22</text><text x="875" y="457">Rothenburg</text><text x="875" y="479">22</text><text x="1048" y="542">Emmen Nord</text><text x="1048" y="567">22</text><text x="1977" y="161">Buchrain</text><text x="1977" y="185">3</text><text x="1931" y="217">Buchrain</text><text x="1931" y="240">3</text></g>
            <g class="peak"><text x="2710" y="94">Rooter</text><text x="2721" y="118">831</text><path d="M2726 72l8-13 8 13zM2782 15l8-13 8 13z"/></g>
            <g class="street"><text transform="translate(566 440) rotate(39)">Luzernstrasse</text><text transform="translate(1622 250) rotate(-72)">Seetalstrasse</text>
              <path id="p-rue" d="M1394 414Q1440 368 1462 336Q1484 304 1486 250" fill="none"/><text class="start"><textPath href="#p-rue">Rüeggisingerstrasse</textPath></text>
              <path id="p-mei" d="M2702 305Q2725 280 2744 240Q2760 195 2800 150" fill="none"/><text class="start"><textPath href="#p-mei">Meierskappelstrasse</textPath></text></g>
            <g class="stream-name"><text transform="translate(1920 270) rotate(-49)">Reuss</text><text transform="translate(1682 506) rotate(-58)">Unterwasserkanal</text></g>
            <g class="shield yellow"><rect x="875" y="82" width="92" height="34" rx="4"/><text x="921" y="106">H363.1</text><rect x="1887" y="8" width="54" height="34" rx="4"/><text x="1914" y="32">367</text></g>
            <g class="shield orange"><rect x="657" y="474" width="30" height="34" rx="4"/><text x="672" y="498">2</text><rect x="1511" y="481" width="42" height="34" rx="4"/><text x="1532" y="505">26</text><rect x="2367" y="100" width="30" height="34" rx="4"/><text x="2382" y="124">4</text></g>
            <g class="shield red"><rect x="1745" y="394" width="54" height="34" rx="4"/><text x="1772" y="418">A14</text></g>
            <path class="plane" d="M1472 374q2 0 2 5v4l10 7v3l-10-3v5l4 3v2l-6-1-6 1v-2l4-3v-5l-10 3v-3l10-7v-4q0-5 2-5z"/>
            <g class="cluster"><circle class="halo" cx="1520" cy="538" r="40"/><circle cx="1520" cy="538" r="30"/><text x="1520" y="547">4</text></g>
          </svg>
          <div class="zoom"><button type="button" aria-label="Zoom in">+</button><button type="button" aria-label="Zoom out">−</button></div>
          <div class="map-stat"><span>PROPERTIES</span><strong>23</strong></div>
        </div>
      </section>
    </main>
  </div>
</div>
</body>
</html>
```
FILE: styles.css
```css
* { box-sizing: border-box; }
body { margin: 0; background: #39383d; font-family: Inter, "Liberation Sans", sans-serif; color: #17202b; }
h1, h2, h3, p, ul { margin: 0; padding: 0; }
button, select { font: inherit; color: inherit; background: none; border: 0; padding: 0; }
a { color: inherit; text-decoration: none; }
.sprite { display: none; }
.icon { width: 32px; height: 32px; flex: none; fill: none; stroke: currentColor; stroke-width: 2; stroke-linecap: round; stroke-linejoin: round; }
.icon.thin { stroke-width: 1.75; }
.icon.small { width: 28px; height: 28px; }
.icon.tiny { width: 24px; height: 24px; }

.app { display: flex; height: calc(100vh - 10px); margin: 2px 8px 8px; border-radius: 12px 12px 32px 32px; overflow: hidden; background: #f8f9fb; }

/* Sidebar */
.sidebar { display: flex; flex-direction: column; flex: none; width: 512px; background: #0a0e10; border-right: 2px solid #1b2023; color: #a9abac; font-size: 28px; }
.sidebar-top { display: flex; justify-content: flex-end; align-items: center; height: 128px; padding-right: 36px; border-bottom: 2px solid #14181a; }
.collapse { display: grid; place-items: center; width: 48px; height: 48px; color: #6d7072; }
.nav { flex: 1; padding: 32px 24px; }
.back { display: flex; align-items: center; gap: 32px; height: 72px; padding-left: 26px; color: #868889; font-weight: 500; }
.org { display: flex; align-items: center; gap: 20px; margin: 32px 8px 7px; padding: 20px 24px; background: #111619; border: 2px solid #171c1f; border-radius: 16px; }
.org-icon { display: grid; place-items: center; width: 56px; height: 56px; border-radius: 12px; background: #152827; color: #3dbb9e; }
.org-label { font-size: 20px; line-height: 22px; font-weight: 500; letter-spacing: 2px; color: #55595b; }
.org-name { font-size: 26px; line-height: 36px; font-weight: 600; color: #dfe0e0; }
.nav-item { display: flex; align-items: center; gap: 20px; width: 100%; height: 72px; padding: 0 24px; border-radius: 12px; font-weight: 600; letter-spacing: .025em; text-align: left; white-space: nowrap; }
.nav-item span { flex: 1; }
.nav-item.active { position: relative; gap: 24px; background: #181e25; color: #fff; font-weight: 500; letter-spacing: 0; }
.nav-item.active::before { content: ""; position: absolute; left: 0; top: 16px; width: 4px; height: 40px; border-radius: 0 4px 4px 0; background: #57ba8d; }
.nav-item.active .icon { color: #57ba8d; }
.nav-groups { display: flex; flex-direction: column; gap: 24px; margin-top: 20px; }
.sidebar-foot { border-top: 2px solid #14181a; padding: 44px 40px 28px; }
.me { display: flex; align-items: center; gap: 20px; }
.me-name { font-size: 26px; line-height: 32px; font-weight: 600; color: #dfe0e0; }
.me-role { font-size: 22px; line-height: 30px; color: #5d6062; }
.avatar { display: grid; place-items: center; width: 64px; height: 64px; border-radius: 50%; background: linear-gradient(135deg, #379a86, #275673); color: #fff; font-size: 24px; font-weight: 600; box-shadow: 0 2px 6px rgba(0, 0, 0, .15); }
.logout { display: flex; align-items: center; gap: 40px; height: 72px; margin-top: 40px; padding-left: 16px; color: #f26d66; font-weight: 500; }

/* Top bar */
.main { flex: 1; min-width: 0; display: flex; flex-direction: column; overflow: hidden; }
.topbar { display: flex; justify-content: space-between; align-items: center; flex: none; height: 160px; padding: 0 48px; background: #fff; border-bottom: 2px solid #edeff2; box-shadow: 0 2px 6px rgba(20, 30, 40, .04); }
.logo { width: 140px; height: 106px; margin-bottom: 16px; }
.logo-word { font: bold 32px "DejaVu Sans", sans-serif; fill: url(#lg-word); }
.topbar-actions { display: flex; align-items: center; gap: 40px; }
.icon-btn { display: grid; place-items: center; width: 72px; height: 72px; }
.pom { margin-bottom: 14px; font-size: 40px; line-height: 48px; font-weight: 700; letter-spacing: 2px; color: #333; }
.pom b { margin-left: 4px; color: #86e094; }
.user { display: flex; align-items: center; gap: 16px; padding: 0 16px 0 8px; font-size: 28px; font-weight: 500; }

/* Page */
.page { padding: 84px 48px 48px; }
.page-head { display: flex; justify-content: space-between; align-items: flex-start; margin-bottom: 16px; }
h1 { font-size: 48px; line-height: 56px; font-weight: 700; letter-spacing: -2px; }
.page-head p { margin-top: 12px; font-size: 28px; line-height: 40px; color: #6b7280; }
.filters { display: flex; align-items: center; padding-top: 4px; font-size: 24px; }
.filters label { margin-right: 12px; color: #6b7280; }
.select { display: grid; align-items: center; width: 384px; margin-right: 16px; }
.select > * { grid-area: 1 / 1; }
.select .icon { justify-self: end; margin-right: 26px; color: #8a8f97; pointer-events: none; }
.select select { appearance: none; width: 100%; height: 64px; padding: 0 24px; border: 2px solid #e2e4e8; border-radius: 12px; background: #f8f9fb; box-shadow: 0 2px 4px rgba(0, 0, 0, .09); }
.refresh { display: grid; place-items: center; width: 68px; height: 64px; border: 2px solid #e2e4e8; border-radius: 12px; background: #fbfcfd; }

.cards { display: grid; grid-template-columns: repeat(3, minmax(0, 1fr)); gap: 32px; }
.card { border: 2px solid #eceef1; border-radius: 24px; background: #fff; box-shadow: 0 2px 4px rgba(20, 30, 40, .12); overflow: hidden; }
.card-head { display: flex; align-items: center; gap: 12px; height: 90px; padding: 34px 40px 18px; border-bottom: 2px solid #e2e5ea; }
.card-head.tall { height: 98px; padding-bottom: 26px; }
.card-head.low { padding-top: 35px; }
.card-head .icon { color: #2f6b5c; }
.card-head .icon.muted { color: #6b7280; }
h2 { font-size: 28px; line-height: 36px; font-weight: 600; letter-spacing: -.025em; }
.column { display: flex; flex-direction: column; gap: 32px; }
.grow { flex: 1; }

.score { padding: 56px 40px 28px; }
.score-top { display: flex; flex-direction: column; align-items: center; margin-bottom: 54px; }
.eyebrow { font-size: 20px; line-height: 30px; letter-spacing: 2px; color: #6b7280; }
.score-row { display: flex; align-items: flex-end; gap: 12px; margin-top: 8px; font-variant-numeric: tabular-nums; }
.score-row strong { font-size: 96px; line-height: 96px; font-weight: 700; color: #36966a; }
.score-row span { font-size: 28px; line-height: 56px; color: #6b7280; font-variant-numeric: normal; }
.strong-badge { height: 42px; margin-top: 16px; padding: 0 20px; border: 2px solid #cbe3d4; border-radius: 20px; background: #ebf4ef; color: #4b9d69; font-size: 20px; line-height: 38px; font-weight: 600; }
.metrics { display: flex; flex-direction: column; gap: 30px; }
.metric-row { display: flex; justify-content: space-between; margin-bottom: 7px; font-size: 24px; line-height: 35px; font-weight: 500; }
.metric-row b { font-weight: 600; color: #36966a; font-variant-numeric: tabular-nums; }
.metric-row b.warn { color: #d97a0b; }
.bar { height: 12px; border-radius: 6px; background: #d5dfdc; overflow: hidden; }
.bar i { display: block; height: 100%; background: #306a5b; }
.metric p { margin-top: 6px; font-size: 20px; line-height: 30px; color: #6b7280; }
.metric.off { opacity: .5; }
.metric.off b { color: #6b7280; }
.pm-link { display: flex; justify-content: space-between; align-items: center; height: 64px; margin-top: 37px; padding: 0 24px; font-size: 24px; font-weight: 500; color: #2f6b5c; }
.pm-link .icon { color: #5f6f72; }

.insights { padding: 24px 40px 36px; }
.donut { display: grid; place-items: center; height: 336px; margin-bottom: 4px; }
.donut svg { width: 272px; height: 272px; }
.legend { display: flex; flex-wrap: wrap; gap: 8px 32px; list-style: none; font-size: 24px; line-height: 32px; color: #6b7280; }
.legend li { display: flex; align-items: center; gap: 12px; }
.legend b { font-weight: 600; color: #17202b; font-variant-numeric: tabular-nums; }
.legend span { color: #a0a5ad; }
.dot { width: 20px; height: 20px; border-radius: 8px; }
h3 { margin: 25px 0 13px; font-size: 20px; line-height: 28px; font-weight: 600; letter-spacing: 2px; color: #6b7280; }
.stack { display: flex; height: 12px; margin-bottom: 12px; border-radius: 6px; overflow: hidden; }
.c-green { background: #4ea152; } .c-mint { background: #54b686; } .c-sky { background: #3c81c2; }
.c-active { background: #45b880; } .c-dark { background: #306a5b; } .c-teal { background: #2c776e; }
.c-amber { background: #f09c0e; } .c-blue { background: #2165a4; } .c-slate { background: #939fb6; }

.tiles { display: grid; grid-template-columns: 1fr 1fr; gap: 16px; padding: 24px 32px 32px; }
.tile { display: flex; flex-direction: column; min-height: 240px; padding: 24px; border: 2px solid #ecedf1; border-radius: 24px; }
.tile-head { display: flex; align-items: center; gap: 16px; margin-bottom: 24px; font-size: 28px; color: #6b7280; }
.tile-icon { display: grid; place-items: center; width: 64px; height: 64px; border-radius: 12px; color: #fff; box-shadow: 0 2px 4px rgba(0, 0, 0, .15); }
.tile strong, .cost strong { font-size: 40px; line-height: 56px; font-weight: 700; font-variant-numeric: tabular-nums; }
.tile small { font-size: 22px; line-height: 32px; font-weight: 500; color: #6b7280; }
.gas { background: radial-gradient(circle at 92% 8%, #f5f6fc, #fbfbfc 55%); }
.oil { background: radial-gradient(circle at 92% 8%, #f3f8f6, #fbfbfc 55%); }
.water { background: radial-gradient(circle at 92% 8%, #f3f8fc, #fbfbfc 55%); }
.gas .tile-icon { background: #447dfb; }
.oil .tile-icon { background: #45b880; }
.water .tile-icon { background: #40b4d8; }
.cost { padding: 24px 40px 38px; }
.cost strong { display: block; }
.cost-bar { height: 16px; margin-top: 16px; border-radius: 8px; background: #f2f3f5; }

/* Map */
.map-card { margin-top: 64px; }
.map-card .card-head { gap: 16px; }
.count-badge { height: 42px; margin-left: 16px; padding: 0 21px; border-radius: 20px; background: #f0f4f4; color: #2a5449; font-size: 20px; line-height: 42px; letter-spacing: -.025em; }
.map { position: relative; min-height: 800px; background: #eef0d6; }
.map-art { display: block; width: 100%; }
.map-art path { vector-effect: non-scaling-stroke; stroke-linejoin: round; }
.map-art use { fill: none; }
.meadow { fill: #d3eab5; } .farm { fill: #eef0d6; } .forest { fill: #b3cfa1; } .bare { fill: #f1eee9; } .golf { fill: #def6c0; }
.industry { fill: #e8dbe6; } .retail { fill: #f1dcd8; } .town { fill: #dfdedf; } .lake { fill: #aad3df; }
.sport { fill: #9fdfc4; } .airfield { fill: #d4dbae; } .station { fill: #7783b5; }
.lane { fill: none; stroke: #fff; stroke-width: 3; }
.track { fill: none; stroke: #b58f4e; stroke-width: 2; stroke-dasharray: 14 8; opacity: .6; }
.track.solid { stroke-dasharray: none; opacity: .4; }
.yard { fill: #f2d6b6; }
.tree { fill: none; stroke: #7fa876; stroke-width: 1.5; }
.strip { fill: none; stroke: #b3cfa1; stroke-width: 8; }
.stream { fill: none; stroke: #a5cfae; stroke-width: 3; }
.border { fill: none; stroke: #a48fae; stroke-width: 3; stroke-dasharray: 8 6 3 6; opacity: .8; }
.river { fill: none; stroke: #aad3df; stroke-width: 16; }
.canal { fill: none; stroke: #aad3df; stroke-width: 7; }
.dots { fill: none; stroke: #5a62d8; stroke-width: 2; stroke-dasharray: 3 6; }
.district { fill: none; stroke: #ab97ab; stroke-width: 6; }
.sidings { fill: none; stroke: #b5b3b5; stroke-width: 8; stroke-dasharray: 30 8; }
.runway { fill: none; stroke: #bbb9cc; stroke-width: 5; }
.runway.wide { stroke-width: 15; }
.case-minor { stroke: #c9c8c4; stroke-width: 6; } .fill-minor { stroke: #fff; stroke-width: 4; }
.case-road { stroke: #c3c1be; stroke-width: 9; } .fill-road { stroke: #fff; stroke-width: 7; }
.case-second { stroke: #c4ca88; stroke-width: 12; } .fill-second { stroke: #f6f8bd; stroke-width: 9; }
.case-first { stroke: #d3a164; stroke-width: 13; } .fill-first { stroke: #fad5a2; stroke-width: 10; }
.case-motor { stroke: #cc7188; stroke-width: 17; } .fill-motor { stroke: #dd93a5; stroke-width: 15; }
.rail { stroke: #707070; stroke-width: 7; } .rail-gap { stroke: #d8d8d4; stroke-width: 2; stroke-dasharray: 14 14; }
.tunnel { fill: none; stroke: #707070; stroke-width: 6; stroke-dasharray: 14 8; }
.tunnel-road { fill: none; stroke: #fbfce6; stroke-width: 9; stroke-dasharray: 14 7; }
.map-art text { font-family: "Noto Sans", sans-serif; text-anchor: middle; paint-order: stroke; stroke: rgba(255, 255, 255, .7); stroke-width: 4px; stroke-linejoin: round; }
.map-art text.start { text-anchor: start; }
.place { font-size: 22px; fill: #333; }
.wood { font-size: 20px; font-style: italic; fill: #668a66; }
.exit { font-size: 20px; font-style: italic; fill: #b9344c; }
.peak { font-size: 20px; fill: #8f6440; } .peak path { fill: #c88e55; }
.street { font-size: 16px; fill: #3d3a30; }
.stream-name { font-size: 18px; font-style: italic; fill: #4f86b5; }
.shield { font-size: 20px; } .shield rect { stroke-width: 2; }
.map-art .shield text { stroke: none; }
.yellow { fill: #55552f; } .yellow rect { fill: #f0f1cf; stroke: #c9cb8f; }
.orange { fill: #6b5232; } .orange rect { fill: #f3e2cc; stroke: #d9b98d; }
.red { fill: #7a2b48; } .red rect { fill: #e8c9d0; stroke: #cf92a3; }
.plane { fill: #8461c4; }
.cluster { fill: rgba(140, 208, 88, .8); } .cluster .halo { fill: rgba(165, 220, 130, .6); }
.map-art .cluster text { font: 24px Inter, sans-serif; fill: #17202b; stroke: none; }
.zoom { position: absolute; left: 20px; top: 20px; display: flex; flex-direction: column; border: 4px solid rgba(0, 0, 0, .2); border-radius: 8px; background-clip: padding-box; }
.zoom button { width: 60px; height: 60px; background: #fff; color: #000; font: bold 44px/62px "Liberation Sans", sans-serif; }
.zoom button:first-child { height: 62px; padding-top: 4px; border-bottom: 2px solid #ccc; border-radius: 4px 4px 0 0; }
.zoom button:last-child { border-radius: 0 0 4px 4px; }
.map-stat { position: absolute; right: 32px; top: 33px; display: flex; flex-direction: column; height: 122px; padding: 16px 24px; border: 2px solid #e8eaee; border-radius: 16px; background: rgba(255, 255, 255, .95); box-shadow: 0 6px 14px rgba(0, 0, 0, .12); }
.map-stat span { font-size: 20px; line-height: 32px; font-weight: 600; letter-spacing: 2px; color: #6b7280; }
.map-stat strong { font-size: 36px; line-height: 52px; font-weight: 700; }
```
